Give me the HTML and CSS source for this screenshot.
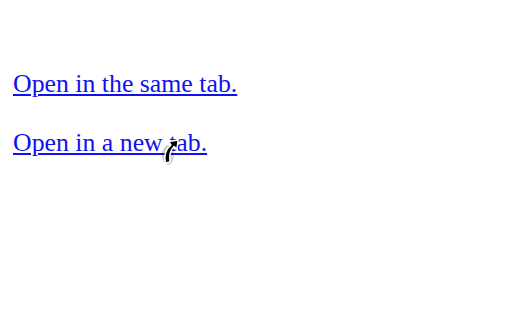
FILE: index.html
```html
<!DOCTYPE html>
<html>
<head>
<meta charset="utf-8">
<link rel="stylesheet" href="styles.css">
</head>
<body>
<main class="page">
  <p class="row"><a class="link" href="#">Open in the same tab.</a></p>
  <p class="row"><a class="link" href="#">Open in a new tab.</a><span class="cursor"><svg width="24" height="32" viewBox="0 0 24 32"><ellipse cx="9" cy="20" rx="6" ry="10" fill="#000" opacity="0.18"/><path d="M6.5 28 C5 21 7 14 12 10 L10 6.5 L19 5 L18 14 L15 11.5 C11.5 15 10 20 11 27 Z" fill="#000" stroke="#fff" stroke-width="1.4" stroke-linejoin="round"/></svg></span></p>
</main>
</body>
</html>
```
FILE: styles.css
```css
html, body { margin: 0; background: #fff; }
.page { padding: 69px 13px 0; font-family: "Liberation Serif", "Times New Roman", serif; font-size: 25.8px; }
.row { margin: 0 0 29px; line-height: 30px; position: relative; }
.link { color: #1010f0; text-decoration: underline; }
.cursor { position: absolute; left: 146px; top: 7px; }
```
